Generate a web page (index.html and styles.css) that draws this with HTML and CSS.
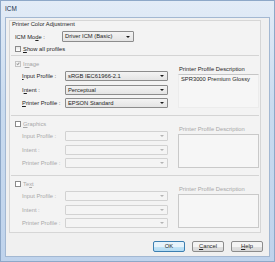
FILE: index.html
```html
<!DOCTYPE html>
<html lang="en">

<head>
    <meta charset="UTF-8">
    <title>ICM</title>
    <link rel="stylesheet" href="styles.css">
</head>

<body>
    <div class="window">
        <!-- Title bar -->
        <div class="titlebar">ICM</div>

        <div class="client">
            <div class="panel">
                <div class="panel-title">Printer Color Adjustment</div>

                <div class="mode-row">
                    <span class="mode-label">ICM Mo<u>d</u>e :</span>
                    <div class="combo mode-combo"><span>Driver ICM (Basic)</span><i class="arrow"></i></div>
                </div>

                <div class="check-row show-all"><span class="check"></span><span><u>S</u>how all profiles</span></div>

                <!-- Image -->
                <div class="group">
                    <div class="fields">
                        <div class="check-row disabled"><span class="check checked"></span><span>I<u>m</u>age</span></div>
                        <div class="field"><span class="label"><u>I</u>nput Profile :</span><div class="combo"><span>sRGB IEC61966-2.1</span><i class="arrow"></i></div></div>
                        <div class="field"><span class="label">I<u>n</u>tent :</span><div class="combo"><span>Perceptual</span><i class="arrow"></i></div></div>
                        <div class="field"><span class="label"><u>P</u>rinter Profile :</span><div class="combo"><span>EPSON Standard</span><i class="arrow"></i></div></div>
                    </div>
                    <div class="desc">
                        <div class="desc-label">Printer Profile Description</div>
                        <div class="desc-box plain">SPR3000 Premium Glossy</div>
                    </div>
                </div>

                <!-- Graphics -->
                <div class="group off">
                    <div class="fields">
                        <div class="check-row"><span class="check"></span><span><u>G</u>raphics</span></div>
                        <div class="field"><span class="label">Input Profile :</span><div class="combo"><span></span><i class="arrow"></i></div></div>
                        <div class="field"><span class="label">Intent :</span><div class="combo"><span></span><i class="arrow"></i></div></div>
                        <div class="field"><span class="label">Printer Profile :</span><div class="combo"><span></span><i class="arrow"></i></div></div>
                    </div>
                    <div class="desc">
                        <div class="desc-label">Printer Profile Description</div>
                        <div class="desc-box"></div>
                    </div>
                </div>

                <!-- Text -->
                <div class="group off">
                    <div class="fields">
                        <div class="check-row"><span class="check"></span><span>Te<u>x</u>t</span></div>
                        <div class="field"><span class="label">Input Profile :</span><div class="combo"><span></span><i class="arrow"></i></div></div>
                        <div class="field"><span class="label">Intent :</span><div class="combo"><span></span><i class="arrow"></i></div></div>
                        <div class="field"><span class="label">Printer Profile :</span><div class="combo"><span></span><i class="arrow"></i></div></div>
                    </div>
                    <div class="desc">
                        <div class="desc-label">Printer Profile Description</div>
                        <div class="desc-box"></div>
                    </div>
                </div>
            </div>

            <!-- Dialog buttons -->
            <div class="buttons">
                <div class="btn default">OK</div>
                <div class="btn"><u>C</u>ancel</div>
                <div class="btn"><u>H</u>elp</div>
            </div>
        </div>
    </div>
</body>

</html>
```

FILE: styles.css
```css
/* Page */
body {
    margin: 0;
    background: #ffffff;
    font-family: "Liberation Sans", Arial, sans-serif;
    font-size: 5.8px;
    color: #1e1e1e;
}

u {
    text-decoration-thickness: 0.5px;
    text-underline-offset: 0.5px;
}

/* Window frame */
.window {
    width: 275px;
    height: 262px;
    box-sizing: border-box;
    border: 1px solid #8ea8c8;
    background: linear-gradient(#e3ecf7, #c9dbef 40%, #bfd3ec);
    display: flex;
    flex-direction: column;
}

.titlebar {
    height: 16px;
    line-height: 15px;
    padding-left: 4px;
    font-size: 6.4px;
    color: #1b2f4a;
}

.client {
    margin: 0 4px 0 4px;
    width: 265px;
    height: 240px;
    box-sizing: border-box;
    border: 1px solid #a3b8d2;
    background: #f0f0f0;
    display: flex;
    flex-direction: column;
}

/* Main group panel */
.panel {
    margin: 2px 0 0 3px;
    width: 252px;
    height: 213px;
    box-sizing: border-box;
    border: 1px solid #d6d6d6;
    background: #f3f3f3;
}

.panel-title {
    line-height: 7px;
    padding-left: 2px;
}

.mode-row {
    display: flex;
    align-items: center;
    margin-top: 3px;
    padding-left: 5px;
}

.mode-label {
    width: 47px;
}

.combo {
    position: relative;
    height: 10px;
    line-height: 8px;
    box-sizing: border-box;
    border: 1px solid #8c8c8c;
    border-radius: 1px;
    background: linear-gradient(#f3f3f3, #e4e4e4);
    padding-left: 2px;
    width: 103px;
}

.mode-combo {
    width: 72px;
    height: 11px;
    line-height: 9px;
}

.arrow {
    position: absolute;
    right: 3px;
    top: 50%;
    margin-top: -1px;
    width: 0;
    height: 0;
    border-left: 2px solid transparent;
    border-right: 2px solid transparent;
    border-top: 2px solid #1a1a1a;
}

/* Checkboxes */
.check-row {
    display: flex;
    align-items: center;
    height: 10px;
    gap: 2px;
}

.show-all {
    margin: 2px 0 1px 5px;
}

.check {
    position: relative;
    width: 6px;
    height: 6px;
    box-sizing: border-box;
    border: 1px solid #8a8a8a;
    background: linear-gradient(#e8e8e8, #ffffff);
}

.check.checked::after {
    content: "";
    position: absolute;
    left: 1px;
    top: 0;
    width: 1px;
    height: 2px;
    border-right: 1px solid #a0a0a0;
    border-bottom: 1px solid #a0a0a0;
    transform: rotate(40deg);
}

.disabled {
    color: #a3a3a3;
}

.disabled .check {
    border-color: #c4c4c4;
    background: #f4f4f4;
}

/* Image / Graphics / Text groups */
.group {
    display: flex;
    gap: 10px;
    margin: 0 1px;
    padding: 3px 0 7px 4px;
    border-top: 1px solid #d4d4d4;
}

.group:last-child {
    padding-bottom: 4px;
}

.fields {
    display: flex;
    flex-direction: column;
    gap: 3.5px;
}

.fields .check-row {
    margin-bottom: -1.5px;
}

.field {
    display: flex;
    align-items: center;
    padding-left: 7px;
}

.label {
    width: 43px;
}

.desc {
    width: 81px;
    display: flex;
    flex-direction: column;
}

.desc-label {
    margin-top: 6px;
    line-height: 8px;
    padding-left: 1px;
}

.desc-box {
    flex: 1;
    margin-top: 1px;
    box-sizing: border-box;
    border: 1px solid #cfcfcf;
    background: #f6f6f6;
    padding: 1px 2px;
}

.desc-box.plain {
    border-color: #c6c6c6 #ececec #ececec #ececec;
}

/* Disabled groups */
.off {
    color: #a8a8a8;
}

.off .combo {
    border-color: #d2d2d2;
    background: #f4f4f4;
}

.off .arrow {
    border-top-color: #b4b4b4;
}

.off .check {
    background: #ffffff;
}

.off .desc-box {
    border-color: #c9c9c9;
}

/* Bottom buttons */
.buttons {
    display: flex;
    justify-content: flex-end;
    gap: 7px;
    margin-top: 8px;
    padding-right: 6px;
}

.btn {
    width: 32px;
    height: 11px;
    line-height: 9px;
    box-sizing: border-box;
    text-align: center;
    border: 1px solid #8c8c8c;
    border-radius: 2px;
    background: linear-gradient(#f4f4f4 50%, #e1e1e1 50%, #d9d9d9);
}

.btn.default {
    border-color: #3c7fb1;
    background: linear-gradient(#e6f3fb 50%, #c4e4f6 50%, #b2dbf3);
}
```
